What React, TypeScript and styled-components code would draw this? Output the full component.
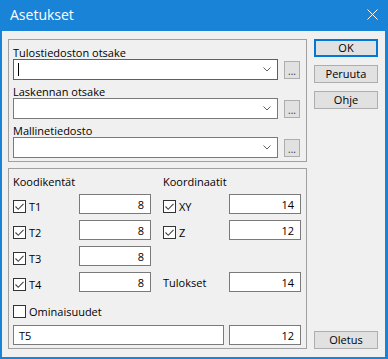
import React from "react";
import styled, { createGlobalStyle } from "styled-components";

const GlobalStyle = createGlobalStyle`
    html, body {
        margin: 0;
        padding: 0;
    }
    body {
        width: 388px;
        height: 359px;
        overflow: hidden;
        background: #ffffff;
        font-family: "Segoe UI", "Open Sans", "Noto Sans", sans-serif;
        font-size: 11px;
        color: #000000;
    }
    * {
        box-sizing: border-box;
    }
`;

const Window = styled.div`
    width: 388px;
    height: 359px;
    display: flex;
    flex-direction: column;
    background: #f0f0f0;
    border: 2px solid #1883d7;
    border-top: none;
    border-right-width: 3px;
`;

const TitleBar = styled.div`
    height: 31px;
    margin: 0 -3px 0 -2px;
    background: #1883d7;
    color: #ffffff;
    display: flex;
    align-items: center;
    justify-content: space-between;
    padding: 0 10px 2px 10px;
    font-size: 14px;
`;

const Body = styled.div`
    flex: 1;
    display: flex;
    gap: 7px;
    padding: 8px 7px 8px 6px;
`;

const LeftColumn = styled.div`
    width: 299px;
    display: flex;
    flex-direction: column;
    gap: 6px;
`;

const RightColumn = styled.div`
    width: 64px;
    display: flex;
    flex-direction: column;
    gap: 8px;
`;

const Group = styled.div<{ $h: number }>`
    height: ${(p) => p.$h}px;
    border: 1px solid #a0a0a0;
    padding: 6px 6px 3px 4px;
`;

const FieldList = styled.div`
    display: flex;
    flex-direction: column;
    gap: 5px;
`;

const Field = styled.div`
    display: flex;
    flex-direction: column;
`;

const Label = styled.div`
    height: 13px;
    line-height: 13px;
    white-space: nowrap;
`;

const ComboRow = styled.div`
    display: flex;
    align-items: center;
    gap: 6px;
`;

const Combo = styled.div<{ $focus?: boolean }>`
    width: 265px;
    height: 21px;
    background: #ffffff;
    border: 1px solid ${(p) => (p.$focus ? "#0078d7" : "#7a7a7a")};
    display: flex;
    align-items: center;
    justify-content: space-between;
    padding: 0 6px 0 4px;
`;

const Caret = styled.div`
    width: 1px;
    height: 13px;
    background: #000000;
`;

const DotsButton = styled.div`
    width: 16px;
    height: 18px;
    background: #e1e1e1;
    border: 1px solid #adadad;
    display: flex;
    align-items: flex-end;
    justify-content: center;
    line-height: 13px;
    font-size: 10px;
    color: #333333;
`;

const Grid = styled.div`
    display: grid;
    grid-template-columns: 66px 72px 12px 66px 72px;
    grid-template-rows: 13px repeat(4, 20px) 21px 20px;
    row-gap: 6px;
`;

const Cell = styled.div<{ $col: number; $span?: number }>`
    grid-column: ${(p) => p.$col} / span ${(p) => p.$span ?? 1};
    display: flex;
    align-items: center;
    white-space: nowrap;
`;

const Heading = styled(Cell)`
    line-height: 13px;
`;

const CheckRow = styled(Cell)`
    padding-top: 5px;
    gap: 3px;
`;

const Box = styled.span`
    width: 13px;
    height: 13px;
    border: 1px solid #333333;
    background: #ffffff;
    display: flex;
    align-items: center;
    justify-content: center;
`;

const NumberInput = styled.div<{ $align?: "left" | "right"; $trim?: number }>`
    height: 20px;
    width: calc(100% - ${(p) => p.$trim ?? 0}px);
    background: #ffffff;
    border: 1px solid #7a7a7a;
    display: flex;
    align-items: center;
    justify-content: ${(p) => (p.$align === "left" ? "flex-start" : "flex-end")};
    padding: 1px 6px 0 5px;
`;

const Button = styled.div<{ $default?: boolean }>`
    height: 18px;
    background: #e1e1e1;
    border: ${(p) => (p.$default ? "2px solid #0078d7" : "1px solid #adadad")};
    display: flex;
    align-items: center;
    justify-content: center;
    padding-bottom: 1px;
`;

const BottomButton = styled(Button)`
    margin-top: auto;
`;

function Chevron() {
    return (
        <svg width="8" height="5" viewBox="0 0 8 5">
            <path d="M0.5 0.5 L4 4 L7.5 0.5" fill="none" stroke="#606060" strokeWidth="1" />
        </svg>
    );
}

function CloseIcon() {
    return (
        <svg width="11" height="11" viewBox="0 0 11 11">
            <path d="M0.5 0.5 L10.5 10.5 M10.5 0.5 L0.5 10.5" stroke="#ffffff" strokeWidth="1" />
        </svg>
    );
}

function CheckMark() {
    return (
        <svg width="9" height="8" viewBox="0 0 9 8">
            <path d="M0.5 3.5 L3.2 6.3 L8.5 0.8" fill="none" stroke="#444444" strokeWidth="1.1" />
        </svg>
    );
}

const fields = [
    { label: "Tulostiedoston otsake", focus: true },
    { label: "Laskennan otsake" },
    { label: "Mallinetiedosto" },
];

const leftRows = [
    { name: "T1", value: "8" },
    { name: "T2", value: "8" },
    { name: "T3", value: "8" },
    { name: "T4", value: "8" },
];

export default function App() {
    return (
        <>
            <GlobalStyle />
            <Window>
                <TitleBar>
                    <span>Asetukset</span>
                    <CloseIcon />
                </TitleBar>
                <Body>
                    <LeftColumn>
                        <Group $h={123}>
                            <FieldList>
                                {fields.map((f) => (
                                    <Field key={f.label}>
                                        <Label>{f.label}</Label>
                                        <ComboRow>
                                            <Combo $focus={f.focus}>
                                                {f.focus ? <Caret /> : <span />}
                                                <Chevron />
                                            </Combo>
                                            <DotsButton>...</DotsButton>
                                        </ComboRow>
                                    </Field>
                                ))}
                            </FieldList>
                        </Group>
                        <Group $h={181}>
                            <Grid>
                                <Heading $col={1} $span={2}>Koodikentät</Heading>
                                <Heading $col={4} $span={2}>Koordinaatit</Heading>
                                {leftRows.map((r, i) => (
                                    <React.Fragment key={r.name}>
                                        <CheckRow $col={1}>
                                            <Box>
                                                <CheckMark />
                                            </Box>
                                            {r.name}
                                        </CheckRow>
                                        <Cell $col={2}>
                                            <NumberInput>{r.value}</NumberInput>
                                        </Cell>
                                        {i === 0 && (
                                            <>
                                                <CheckRow $col={4}>
                                                    <Box>
                                                        <CheckMark />
                                                    </Box>
                                                    XY
                                                </CheckRow>
                                                <Cell $col={5}>
                                                    <NumberInput>14</NumberInput>
                                                </Cell>
                                            </>
                                        )}
                                        {i === 1 && (
                                            <>
                                                <CheckRow $col={4}>
                                                    <Box>
                                                        <CheckMark />
                                                    </Box>
                                                    Z
                                                </CheckRow>
                                                <Cell $col={5}>
                                                    <NumberInput>12</NumberInput>
                                                </Cell>
                                            </>
                                        )}
                                        {i === 2 && <Cell $col={4} />}
                                        {i === 3 && (
                                            <>
                                                <Cell $col={4}>Tulokset</Cell>
                                                <Cell $col={5}>
                                                    <NumberInput>14</NumberInput>
                                                </Cell>
                                            </>
                                        )}
                                    </React.Fragment>
                                ))}
                                <CheckRow $col={1} $span={4}>
                                    <Box />
                                    Ominaisuudet
                                </CheckRow>
                                <Cell $col={1} $span={4}>
                                    <NumberInput $align="left" $trim={5}>T5</NumberInput>
                                </Cell>
                                <Cell $col={5}>
                                    <NumberInput>12</NumberInput>
                                </Cell>
                            </Grid>
                        </Group>
                    </LeftColumn>
                    <RightColumn>
                        <Button $default>OK</Button>
                        <Button>Peruuta</Button>
                        <Button>Ohje</Button>
                        <BottomButton>Oletus</BottomButton>
                    </RightColumn>
                </Body>
            </Window>
        </>
    );
}
